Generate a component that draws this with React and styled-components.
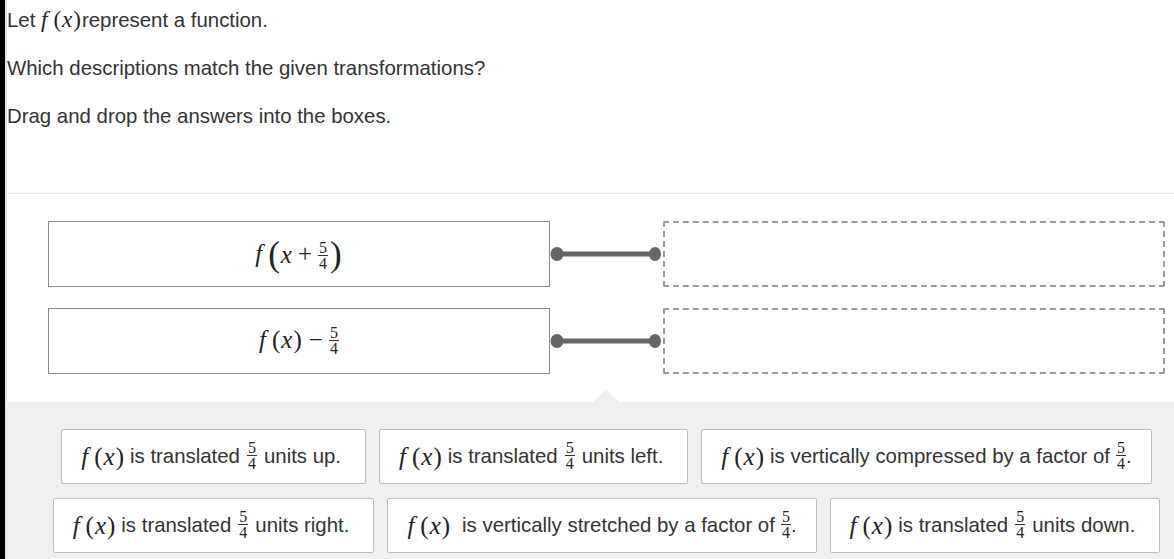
import React from "react";
import styled, { createGlobalStyle } from "styled-components";

const Global = createGlobalStyle`
  html, body { margin: 0; padding: 0; background: #fff; overflow: hidden; }
  body { font-family: "Liberation Sans", Arial, sans-serif; color: #333; }
`;

const Frame = styled.div`
  display: flex;
  border-left: 5px solid #000;
  min-height: 100vh;
  box-sizing: border-box;
`;

const Edge = styled.div`
  width: 2px;
  flex: none;
  background: #e6e6e6;
`;

const Content = styled.div`
  width: 1199px;
  flex: none;
  display: flex;
  flex-direction: column;
`;

const Prompt = styled.div`
  padding-top: 8px;
  box-sizing: border-box;
  height: 194px;
  border-bottom: 1px solid #e6e6e6;
`;

const P = styled.p`
  margin: 0 0 24px;
  font-size: 20.4px;
  line-height: 24px;
  color: #333;
`;

const Matching = styled.div`
  display: grid;
  grid-template-columns: 502px 113px 1fr;
  row-gap: 21px;
  padding: 27px 41px 28px;
  align-items: center;
`;

const Term = styled.div`
  height: 66px;
  box-sizing: border-box;
  border: 1px solid #8a8a8a;
  display: flex;
  align-items: center;
  justify-content: center;
  background: #fff;
`;

const Drop = styled.div`
  height: 66px;
  box-sizing: border-box;
  border: 2px dashed #9a9a9a;
  border-radius: 2px;
`;

const Tray = styled.div`
  position: relative;
  flex: 1;
  background: #f0f0f0;
  padding: 27px 0 6px;
  display: flex;
  flex-direction: column;
  align-items: center;
  gap: 14px;
`;

const Notch = styled.div`
  position: absolute;
  top: -12px;
  left: 586px;
  width: 0;
  height: 0;
  border-left: 13px solid transparent;
  border-right: 13px solid transparent;
  border-bottom: 12px solid #f0f0f0;
`;

const TileRow = styled.div`
  display: flex;
  gap: 13px;
  justify-content: center;
`;

const Tile = styled.div`
  height: 55px;
  box-sizing: border-box;
  padding: 0 19px;
  border: 1px solid #bdbdbd;
  border-radius: 2px;
  background: #fff;
  display: flex;
  align-items: center;
  font-size: 20.4px;
  color: #333;
  white-space: nowrap;
`;

const Math = styled.span`
  font-family: "Liberation Serif", "Times New Roman", serif;
  font-size: ${(p) => p.$size || 25}px;
  color: #222;
  white-space: nowrap;
`;

const I = styled.span`
  font-style: italic;
  margin-right: ${(p) => p.$mr || 0}px;
`;

const Paren = styled.span`
  display: inline-block;
  font-size: ${(p) => (p.$big ? 1.4 : 1)}em;
  line-height: 1;
  vertical-align: ${(p) => (p.$big ? "-0.1em" : "baseline")};
  margin: 0 1px;
`;

const Op = styled.span`
  margin: 0 6px;
`;

const FracBox = styled.span`
  display: inline-flex;
  flex-direction: column;
  align-items: center;
  vertical-align: middle;
  font-family: "Liberation Serif", "Times New Roman", serif;
  font-size: 16px;
  line-height: 13px;
  margin: ${(p) => p.$m || "0 4px"};
  color: #222;
  position: relative;
  top: -1px;
`;

const Num = styled.span`
  padding: 0 1px 1px;
  border-bottom: 1px solid #333;
`;

const Den = styled.span`
  padding-top: 1px;
`;

const Frac = ({ n = 5, d = 4, m }) => (
  <FracBox $m={m}>
    <Num>{n}</Num>
    <Den>{d}</Den>
  </FracBox>
);

const Fx = () => (
  <Math>
    <I $mr={5}>f</I>
    <Paren>(</Paren>
    <I>x</I>
    <Paren>)</Paren>
  </Math>
);

const Connector = () => (
  <svg width="113" height="16" viewBox="0 0 113 16" style={{ display: "block" }}>
    <line x1="7" y1="8" x2="105" y2="8" stroke="#666" strokeWidth="5" />
    <ellipse cx="7" cy="8" rx="6.5" ry="7" fill="#666" />
    <ellipse cx="105" cy="8" rx="6" ry="7" fill="#666" />
  </svg>
);

const Txt = styled.span`
  margin: 0 ${(p) => p.$m || 0}px;
`;

export default function App() {
  return (
    <>
      <Global />
      <Frame>
        <Edge />
        <Content>
          <Prompt>
            <P>
              Let{" "}
              <Math $size={23}>
                <I $mr={5}>f</I>
                <Paren>(</Paren>
                <I>x</I>
                <Paren>)</Paren>
              </Math>
              represent a function.
            </P>
            <P>Which descriptions match the given transformations?</P>
            <P>Drag and drop the answers into the boxes.</P>
          </Prompt>
          <Matching>
            <Term>
              <Math>
                <I $mr={5}>f</I>
                <Paren $big>(</Paren>
                <I>x</I>
                <Op>+</Op>
                <Frac m="0 1px 0 0" />
                <Paren $big>)</Paren>
              </Math>
            </Term>
            <Connector />
            <Drop />
            <Term>
              <Math>
                <I $mr={5}>f</I>
                <Paren>(</Paren>
                <I>x</I>
                <Paren>)</Paren>
                <Op>−</Op>
                <Frac m="0" />
              </Math>
            </Term>
            <Connector />
            <Drop />
          </Matching>
          <Tray>
            <Notch />
            <TileRow>
              <Tile>
                <Fx />
                <Txt $m={5}>is translated</Txt>
                <Frac m="0 2px" />
                <Txt $m={5}>units up.</Txt>
              </Tile>
              <Tile>
                <Fx />
                <Txt $m={5}>is translated</Txt>
                <Frac m="0 2px" />
                <Txt $m={5}>units left.</Txt>
              </Tile>
              <Tile>
                <Fx />
                <Txt $m={5}>is vertically compressed by a factor of</Txt>
                <Frac m="0 0 0 1px" />
                <Txt>.</Txt>
              </Tile>
            </TileRow>
            <TileRow>
              <Tile>
                <Fx />
                <Txt $m={5}>is translated</Txt>
                <Frac m="0 2px" />
                <Txt $m={5}>units right.</Txt>
              </Tile>
              <Tile>
                <Fx />
                <Txt $m={11}>is vertically stretched by a factor of</Txt>
                <Frac m="0 0 0 -5px" />
                <Txt>.</Txt>
              </Tile>
              <Tile>
                <Fx />
                <Txt $m={5}>is translated</Txt>
                <Frac m="0 2px" />
                <Txt $m={5}>units down.</Txt>
              </Tile>
            </TileRow>
          </Tray>
        </Content>
      </Frame>
    </>
  );
}
